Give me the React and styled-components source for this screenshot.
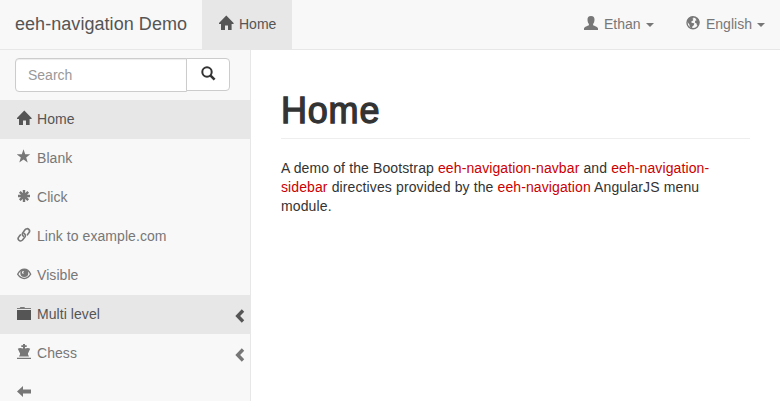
import React from "react";
import styled, { createGlobalStyle, css } from "styled-components";

const GlobalStyle = createGlobalStyle`
  * { box-sizing: border-box; }
  body {
    margin: 0;
    overflow: hidden;
    background: #fff;
    color: #333;
    font: 14px/20px "Liberation Sans", Arial, sans-serif;
  }
`;

const Page = styled.div`
  height: 401px;
  overflow: hidden;
  display: flex;
  flex-direction: column;
`;

const Navbar = styled.nav`
  display: flex;
  flex: none;
  height: 50px;
  background: #f8f8f8;
  border-bottom: 1px solid #e7e7e7;
`;

const Brand = styled.a`
  width: 202px;
  padding: 14px 15px;
  font-size: 18px;
  letter-spacing: 0.05px;
  white-space: nowrap;
  color: #555;
`;

const NavItem = styled.a`
  display: flex;
  align-items: center;
  width: ${(p) => p.$width}px;
  padding: 0 15px 2px;
  color: ${(p) => (p.$active ? "#555" : "#777")};
  background: ${(p) => (p.$active ? "#e7e7e7" : "transparent")};
`;

const NavRight = styled.div`
  display: flex;
  margin-left: auto;
`;

const Caret = styled.span`
  margin: 3px 0 0 auto;
  border-top: 4px solid currentColor;
  border-left: 4px solid transparent;
  border-right: 4px solid transparent;
`;

const Body = styled.div`
  display: flex;
  flex: 1;
  min-height: 0;
`;

const Sidebar = styled.aside`
  flex: none;
  width: 251px;
  background: #f8f8f8;
  border-right: 1px solid #e7e7e7;
`;

const SearchGroup = styled.div`
  display: flex;
  align-items: flex-start;
  height: 50px;
  padding: 8px 20px 0 15px;
`;

const SearchInput = styled.input`
  width: 172px;
  height: 34px;
  padding: 6px 12px;
  border: 1px solid #ccc;
  border-radius: 4px 0 0 4px;
  background: #fff;
  box-shadow: inset 0 1px 1px rgba(0, 0, 0, 0.075);
  font: inherit;
  outline: none;
  &::placeholder { color: #999; opacity: 1; }
`;

const SearchButton = styled.button`
  display: flex;
  width: 44px;
  height: 33px;
  margin-left: -1px;
  padding: 7px 14px;
  border: 1px solid #ccc;
  border-radius: 0 4px 4px 0;
  background: #fff;
  color: #333;
`;

const MenuItem = styled.a`
  display: flex;
  align-items: center;
  height: 39px;
  padding: 0 5px 2px 15px;
  letter-spacing: 0.06px;
  color: ${(p) => (p.$active ? "#555" : "#777")};
  ${(p) => p.$active && css`background: #e7e7e7;`}
`;

const Glyph = styled.svg`
  display: block;
  flex: none;
  width: 16px;
  height: 16px;
  margin: 0 4px 1px 2px;
  fill: currentColor;
`;

const SearchGlyph = styled(Glyph)`
  margin: 0;
`;

const Chevron = styled.svg`
  flex: none;
  width: 10px;
  height: 14px;
  margin: 5px 0 0 auto;
  fill: none;
  stroke: currentColor;
  stroke-width: 3.4;
`;

const Main = styled.main`
  flex: 1;
  padding: 40px 30px 0;
`;

const Title = styled.h1`
  height: 49px;
  margin: 0;
  border-bottom: 1px solid #eee;
  font-size: 36px;
  line-height: 41px;
  font-weight: 400;
  letter-spacing: 0.8px;
  -webkit-text-stroke: 1.3px #333;
`;

const Copy = styled.p`
  margin: 20px 0 0;
  line-height: 19px;
  letter-spacing: 0.12px;
`;

const Code = styled.a`
  color: #c00;
  letter-spacing: 0.1px;
`;

const icons = {
  home: <path d="M7.300.4 14.600 8v1H12.600v6H9v-4.500H6V15H2V9H0V8z" />,
  star: <path d="m6.500.3 1.700 4.900 5 .1-4 3.100 1.500 5-4.200-2.900-4.200 2.900 1.500-5-4-3.100 5-.1z" />,
  asterisk: (
    <path
      d="M7 2v12M1 8h12M2.800 3.800l8.400 8.400M11.200 3.800l-8.400 8.400"
      fill="none"
      stroke="currentColor"
      strokeWidth="2.400"
    />
  ),
  link: (
    <g fill="none" stroke="currentColor" strokeWidth="1.600" strokeLinecap="round">
      <path d="M6.400 9.300C4.800 7.700 5 6.500 6.200 5.200l2-2.600c1.100-1.200 2.600-1.200 3.600-.2 1.100 1.100 1 2.400 0 3.500L10.400 7.800" />
      <path d="M7.100 6.400C8.800 7.900 8.700 9.200 7.500 10.500l-2 2.500c-1.100 1.200-2.600 1.200-3.600.2-1.100-1.100-1-2.400 0-3.500L3.300 7.900" />
    </g>
  ),
  eye: (
    <g transform="translate(0 .6)">
      <path
        d="M.6 7.600C2.600 4 4.900 2.500 7.300 2.500S12 4 13.700 7.600c-2 3-4 4.300-6.400 4.300S2.600 10.600.6 7.600z"
        fill="none"
        stroke="currentColor"
        strokeWidth="1.300"
      />
      <path fillRule="evenodd" d="M7.300 2.500a4 4 0 1 1 0 8 4 4 0 0 1 0-8zM5 5.600c.1 1.500 1 1.900 1.800 1.500-.8-.8-.6-1.900.2-2.700C5.900 4.200 5.200 4.700 5 5.600z" />
    </g>
  ),
  folder: (
    <>
      <path d="M0 4V3h2.800l.6-1h4l.6 1h6v1z" opacity=".75" />
      <path d="M0 5h14v10H0z" />
    </>
  ),
  chess: <path d="M6 0h2v1.200h1.700v1.900H8v1.500c2-.9 4-.7 5.200.2L11.200 9H2.800L.8 4.800C2 3.900 4 3.700 6 4.600V3.100H4.300V1.200H6zM3 9h8v1.500l1 2H2l1-2zM0 13.700h14v1.300H0z" />,
  back: <path d="M0 8.500 6 3v3.500h8v4H6V14z" />,
  user: <path d="M7 1c2.600 0 3.600 1.600 3.500 4-.1 1.900-.7 3.200-1.400 3.900v1.300c1.300.8 4.900 1.500 4.900 3.300V15H0v-1.500c0-1.800 3.600-2.500 4.900-3.300V8.900C4.200 8.200 3.600 6.900 3.500 5 3.400 2.600 4.400 1 7 1z" />,
  globe: (
    <>
      <circle cx="7" cy="7.800" r="6" fill="none" stroke="currentColor" strokeWidth="1.400" />
      <path d="M1.200 6.500C2 4 3.500 2 6.600 1.600L7.800 3 6.400 3.800l1 1.100L6 6.300 4.800 7.100l1.700.8 1.800.4-.5 2L6.300 11.500l-.2 2.100-2.300-1.500-.3-2.300zM9.300 3.500l1.900-.8c1.600 1.200 2.200 2.700 2.300 4.800l-1.600 3.300-1-.5-.3-1.900-1.700-.8.300-1.800 1.500-.6z" />
    </>
  ),
  search: (
    <g fill="none" stroke="currentColor">
      <circle cx="6" cy="6" r="4.700" strokeWidth="2" />
      <path d="m9.600 9.600 4 4" strokeWidth="2.600" />
    </g>
  ),
};

function Icon({ name }) {
  return <Glyph viewBox="0 0 16 16" aria-hidden="true">{icons[name]}</Glyph>;
}

const menu = [
  { icon: "home", label: "Home", active: true },
  { icon: "star", label: "Blank" },
  { icon: "asterisk", label: "Click" },
  { icon: "link", label: "Link to example.com" },
  { icon: "eye", label: "Visible" },
  { icon: "folder", label: "Multi level", active: true, nested: true },
  { icon: "chess", label: "Chess", nested: true },
  { icon: "back" },
];

export default function App() {
  return (
    <Page>
      <GlobalStyle />
      <Navbar>
        <Brand>eeh-navigation Demo</Brand>
        <NavItem $active $width={90}><Icon name="home" />Home</NavItem>
        <NavRight>
          <NavItem $width={102}><Icon name="user" />Ethan<Caret /></NavItem>
          <NavItem $width={111}><Icon name="globe" />English<Caret /></NavItem>
        </NavRight>
      </Navbar>
      <Body>
        <Sidebar>
          <SearchGroup>
            <SearchInput placeholder="Search" />
            <SearchButton aria-label="Search">
              <SearchGlyph viewBox="0 0 16 16">{icons.search}</SearchGlyph>
            </SearchButton>
          </SearchGroup>
          {menu.map((item) => (
            <MenuItem key={item.icon} $active={item.active}>
              <Icon name={item.icon} />
              {item.label}
              {item.nested && (
                <Chevron viewBox="0 0 10 14"><path d="M8 1.500 2.700 7 8 12.500" /></Chevron>
              )}
            </MenuItem>
          ))}
        </Sidebar>
        <Main>
          <Title>Home</Title>
          <Copy>
            A demo of the Bootstrap <Code>eeh-navigation-navbar</Code> and{" "}
            <Code>eeh-navigation-sidebar</Code> directives provided by the{" "}
            <Code>eeh-navigation</Code> AngularJS menu module.
          </Copy>
        </Main>
      </Body>
    </Page>
  );
}
